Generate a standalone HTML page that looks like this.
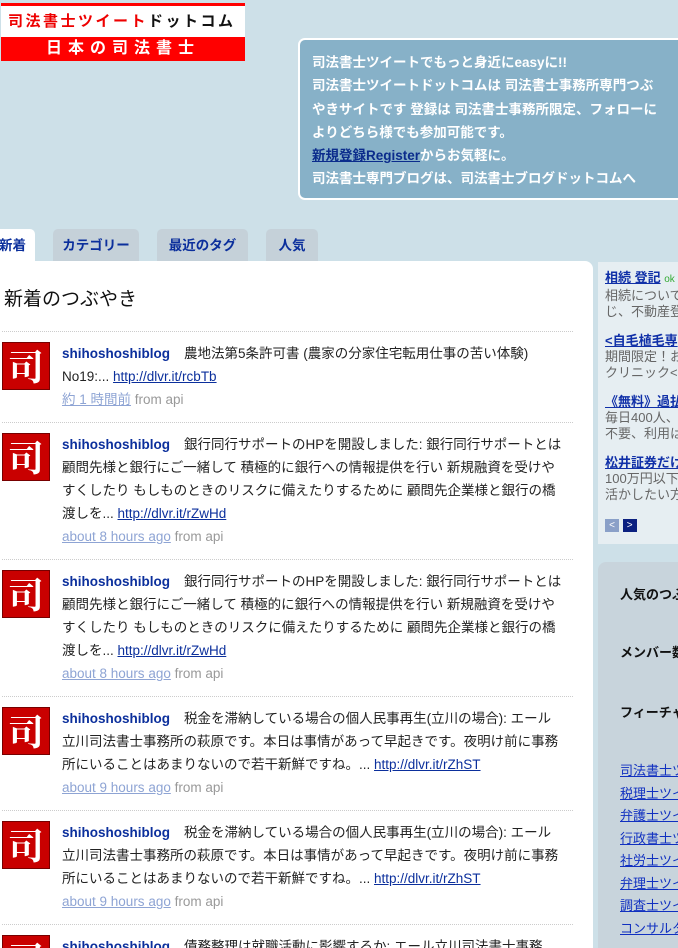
<!DOCTYPE html>
<html><head><meta charset="utf-8"><style>
*{margin:0;padding:0;box-sizing:border-box}
html,body{width:678px;height:948px;overflow:hidden}
body{background:#cde0e8;font-family:"Liberation Sans","Noto Sans CJK JP",sans-serif;position:relative;font-size:14px}
.abs{position:absolute}
a{color:#0b2f9c}
.logo{left:1px;top:3px;width:244px;height:58px;background:#fff;border-top:3px solid #f00;overflow:hidden}
.logo .t{height:31px;line-height:31px;font-size:15px;font-weight:bold;padding-left:7px;letter-spacing:2.5px;color:#e00;white-space:nowrap}
.logo .b{height:24px;background:#f00;color:#fff;text-align:center;font-size:16px;font-weight:bold;line-height:24px;letter-spacing:6px;white-space:nowrap}
.info{left:298px;top:38px;width:400px;height:162px;background:#87b1c8;border:2px solid #fff;border-radius:7px;color:#fff;font-size:13.5px;font-weight:bold;padding:11px 0 0 12px;line-height:23.3px;white-space:nowrap}
.info a{color:#0b2c8c}
.tab{top:229px;height:32px;background:#c5d1d9;border-radius:5px 5px 0 0;color:#0b2f9c;font-size:13.5px;font-weight:bold;text-align:center;line-height:33px}
.main{left:0;top:261px;width:593px;height:700px;background:#fff;border-radius:0 8px 0 0}
h2{position:absolute;left:4px;top:284px;font-size:19px;font-weight:normal;color:#111}
.sep{left:2px;width:571px;border-top:1px dotted #ccc}
.av{left:2px;width:48px;height:48px;background:#c90000;border:1px solid #700;color:#fff;font-size:36px;font-weight:bold;text-align:center;line-height:46px;font-family:"Noto Serif CJK SC",serif}
.tx{left:62px;width:500px;line-height:23px;color:#222;font-size:13.5px}
.tx b{color:#0b2f9c;margin-right:14px}
.meta{color:#999}
.meta a{color:#8ea4d4}
.side{left:598px;top:262px;width:90px;height:282px;background:#e6eef2}
.side div{font-size:13px;line-height:16px;color:#666;white-space:nowrap;margin-bottom:13px}
.side a{font-weight:bold;color:#1030a8}
.p2{left:598px;top:562px;width:90px;height:390px;background:#c8d4dc;border-radius:8px 0 0 0}
.p2 .h{position:absolute;left:22px;font-size:13px;font-weight:bold;color:#111;white-space:nowrap}
.p2 .l{position:absolute;left:22px;top:198px;font-size:13px;line-height:22.5px;white-space:nowrap}
.p2 .l a{color:#1030c0;display:block}
</style></head><body>
<div class="abs logo"><div class="t">司法書士ツイート<span style="color:#111">ドットコム</span></div><div class="b">日本の司法書士</div></div>
<div class="abs info">司法書士ツイートでもっと身近にeasyに!!<br>司法書士ツイートドットコムは 司法書士事務所専門つぶ<br>やきサイトです 登録は 司法書士事務所限定、フォローに<br>よりどちら様でも参加可能です。<br><a href="#">新規登録Register</a>からお気軽に。<br>司法書士専門ブログは、司法書士ブログドットコムへ</div>
<div class="abs tab" style="left:-10px;width:45px;background:#fff;color:#0b2f9c;height:34px">新着</div>
<div class="abs tab" style="left:53px;width:86px">カテゴリー</div>
<div class="abs tab" style="left:157px;width:91px">最近のタグ</div>
<div class="abs tab" style="left:266px;width:52px">人気</div>
<div class="abs main"></div>
<h2>新着のつぶやき</h2>
<div class="abs sep" style="top:331px"></div>
<div class="abs av" style="top:342px">司</div>
<div class="abs tx" style="top:342px"><b>shihoshoshiblog</b>農地法第5条許可書 (農家の分家住宅転用仕事の苦い体験) No19:... <a href="#">http://dlvr.it/rcbTb</a><br><span class="meta"><a href="#">約 1 時間前</a> from api</span></div>
<div class="abs sep" style="top:422px"></div>
<div class="abs av" style="top:433px">司</div>
<div class="abs tx" style="top:433px"><b>shihoshoshiblog</b>銀行同行サポートのHPを開設しました: 銀行同行サポートとは 顧問先様と銀行にご一緒して 積極的に銀行への情報提供を行い 新規融資を受けやすくしたり もしものときのリスクに備えたりするために 顧問先企業様と銀行の橋渡しを... <a href="#">http://dlvr.it/rZwHd</a><br><span class="meta"><a href="#">about 8 hours ago</a> from api</span></div>
<div class="abs sep" style="top:559px"></div>
<div class="abs av" style="top:570px">司</div>
<div class="abs tx" style="top:570px"><b>shihoshoshiblog</b>銀行同行サポートのHPを開設しました: 銀行同行サポートとは 顧問先様と銀行にご一緒して 積極的に銀行への情報提供を行い 新規融資を受けやすくしたり もしものときのリスクに備えたりするために 顧問先企業様と銀行の橋渡しを... <a href="#">http://dlvr.it/rZwHd</a><br><span class="meta"><a href="#">about 8 hours ago</a> from api</span></div>
<div class="abs sep" style="top:696px"></div>
<div class="abs av" style="top:707px">司</div>
<div class="abs tx" style="top:707px"><b>shihoshoshiblog</b>税金を滞納している場合の個人民事再生(立川の場合): エール立川司法書士事務所の萩原です。本日は事情があって早起きです。夜明け前に事務所にいることはあまりないので若干新鮮ですね。... <a href="#">http://dlvr.it/rZhST</a><br><span class="meta"><a href="#">about 9 hours ago</a> from api</span></div>
<div class="abs sep" style="top:810px"></div>
<div class="abs av" style="top:821px">司</div>
<div class="abs tx" style="top:821px"><b>shihoshoshiblog</b>税金を滞納している場合の個人民事再生(立川の場合): エール立川司法書士事務所の萩原です。本日は事情があって早起きです。夜明け前に事務所にいることはあまりないので若干新鮮ですね。... <a href="#">http://dlvr.it/rZhST</a><br><span class="meta"><a href="#">about 9 hours ago</a> from api</span></div>
<div class="abs sep" style="top:924px"></div>
<div class="abs av" style="top:935px">司</div>
<div class="abs tx" style="top:935px"><b>shihoshoshiblog</b>債務整理は就職活動に影響するか: エール立川司法書士事務</div>
<div class="abs side"><div style="padding:8px 0 0 7px">
<div><a href="#">相続 登記</a> <span style="color:#3a3;font-size:10px">ok</span><br>相続について<br>じ、不動産登</div>
<div><a href="#">&lt;自毛植毛専</a><br>期間限定！お<br>クリニック&lt;公</div>
<div><a href="#">《無料》過払</a><br>毎日400人、<br>不要、利用は</div>
<div><a href="#">松井証券だけ</a><br>100万円以下<br>活かしたい方</div>
<span style="display:inline-block;width:14px;height:13px;background:#8aa0c8;color:#fff;font-size:10px;text-align:center;line-height:13px">&lt;</span> <span style="display:inline-block;width:14px;height:13px;background:#0b2080;color:#fff;font-size:10px;text-align:center;line-height:13px">&gt;</span>
</div></div>
<div class="abs p2">
<div class="h" style="top:22px">人気のつぶやき</div>
<div class="h" style="top:80px">メンバー数</div>
<div class="h" style="top:140px">フィーチャー</div>
<div class="l"><a href="#">司法書士ツ</a><a href="#">税理士ツイ</a><a href="#">弁護士ツイ</a><a href="#">行政書士ツ</a><a href="#">社労士ツイ</a><a href="#">弁理士ツイ</a><a href="#">調査士ツイ</a><a href="#">コンサルタ</a></div>
</div>
</body></html>
